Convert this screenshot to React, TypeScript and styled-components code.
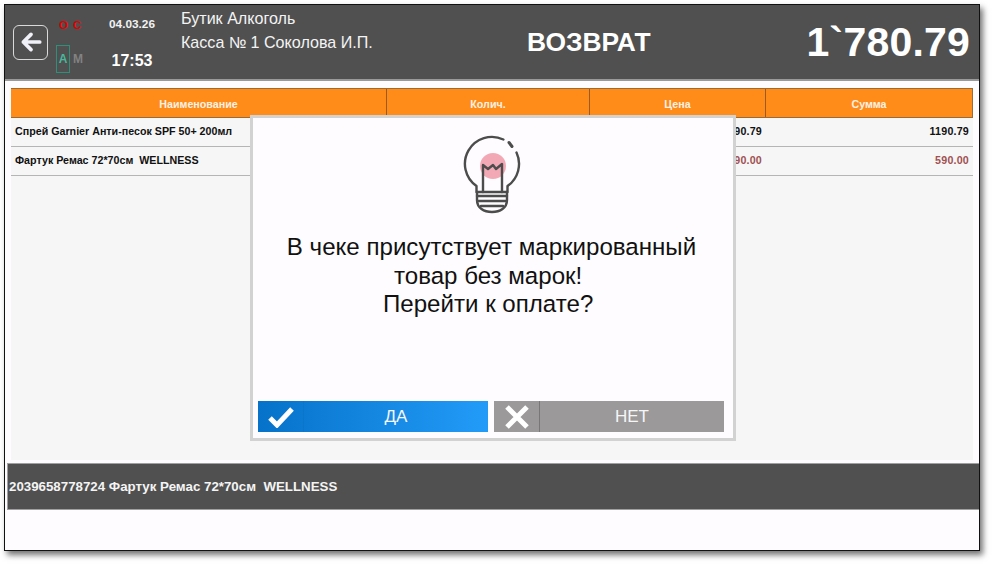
import React from "react";
import styled, { createGlobalStyle } from "styled-components";

const Global = createGlobalStyle`
  html, body { margin: 0; padding: 0; background: #fff; width: 993px; height: 564px; overflow: hidden; }
  * { box-sizing: border-box; }
`;
const Page = styled.div`
  width: 993px; height: 564px; padding: 4px 0 0 4px; background: #fff;
  font-family: "Liberation Sans", Arial, sans-serif;
`;
const Frame = styled.div`
  position: relative; width: 976px; height: 547px; background: #fefcfe;
  border: 1px solid #111; display: flex; flex-direction: column;
  box-shadow: 3px 4px 6px rgba(0,0,0,.55);
`;
const Header = styled.header`
  height: 76px; flex: none; background: #505050; border-bottom: 2px solid #9a9a9a;
  display: grid; grid-template-columns: 47px 51px 75px 346px 1fr auto; align-items: stretch; color: #fff;
`;
const BackCell = styled.div`display: flex; align-items: center; padding: 0 0 0 8px;`;
const BackButton = styled.div`
  width: 35px; height: 35px; border: 1.5px solid #d9d9d9; border-radius: 6px;
  display: flex; align-items: center; justify-content: center;
`;
const Status = styled.div`display: flex; flex-direction: column; padding: 15px 0 0 4px;`;
const Leds = styled.div`
  display: flex; gap: 5px; padding-left: 3px; color: #e00000; font-size: 11.5px; font-weight: 700; line-height: 11px;
`;
const Modes = styled.div`display: flex; align-items: center; margin-top: 14px; font-size: 12px; font-weight: 700;`;
const ModeA = styled.span`
  width: 14px; height: 28px; border: 1px solid #2f8f78; color: #48b79c;
  display: flex; align-items: center; justify-content: center;
`;
const ModeM = styled.span`color: #828282; margin-left: 3px;`;
const Clock = styled.div`display: flex; flex-direction: column; align-items: center; padding-top: 12px; margin-left: -17px;`;
const DateText = styled.div`font-size: 11.8px; font-weight: 700; line-height: 14px; color: #f2f2f2;`;
const TimeText = styled.div`font-size: 16px; font-weight: 700; line-height: 18px; margin-top: 21px;`;
const Shop = styled.div`
  padding: 1px 0 0 3px; font-size: 16.1px; line-height: 24px; color: #f4f4f4; white-space: nowrap;
`;
const Mode = styled.div`
  font-size: 26.4px; font-weight: 700; display: flex; align-items: center; margin-left: 3px;
`;
const Total = styled.div`
  font-size: 41px; font-weight: 700; display: flex; align-items: center; padding: 0 9px 0 0; letter-spacing: .2px;
`;
const Body = styled.div`flex: 1; min-height: 0; display: flex; flex-direction: column;`;
const TableArea = styled.div`
  height: 372px; margin: 7px 6px 0 6px; background: #f6f6f6; flex: none;
`;
const Row = styled.div`
  display: grid; grid-template-columns: 376px 203px 176px 1fr; height: 29px; align-items: center;
`;
const HeadRow = styled(Row)`
  background: #ff8c19; height: 30px; border: 1px solid #9a6a3a; border-width: 1px 1px 1px 0;
`;
const HeadCell = styled.div`
  height: 100%; display: flex; align-items: center; justify-content: center; padding-top: 1px;
  color: #fdf1e4; font-size: 10.7px; font-weight: 700; border-right: 1px solid #9a5a20;
  &:last-child { border-right: 0; }
`;
const BodyRow = styled(Row)`border-bottom: 1px solid #b5b5b5; padding-bottom: 2px;`;
const Name = styled.div`padding-left: 4px; font-size: 10.7px; font-weight: 700; color: #111; white-space: pre;`;
const Num = styled.div<{ $return?: boolean }>`
  text-align: right; padding-right: 4px; font-size: 10.7px; font-weight: 700; letter-spacing: .2px;
  color: ${p => (p.$return ? "#a05050" : "#111")};
`;
const ScanBar = styled.div`
  height: 47px; margin: 3px 0 0 2px; flex: none; background: #505050; border: 1px solid #a0a0a0; border-right: 0;
  color: #f4f4f4; font-size: 13.3px; font-weight: 700; display: flex; align-items: center; padding-left: 1px; white-space: pre;
`;
const Dialog = styled.div`
  position: absolute; left: 245px; top: 110px; width: 486px; height: 326px; background: #fefcfe;
  border: 3px solid #d2d2d2; display: flex; flex-direction: column; align-items: center;
`;
const Bulb = styled.svg`width: 62px; height: 80px; margin-top: 17px; flex: none;`;
const Message = styled.div`
  margin-top: 18px; padding-right: 3px; text-align: center; font-size: 24.1px; line-height: 28.5px; color: #111; white-space: pre;
`;
const Actions = styled.div`
  margin-top: auto; margin-bottom: 6px; width: 100%; padding: 0 0 0 5px; display: flex; gap: 6px;
`;
const Action = styled.div<{ $primary?: boolean }>`
  width: 230px; height: 31px; display: grid; grid-template-columns: 46px 1fr; color: #f6f6f6; font-size: 17px;
  background: ${p => (p.$primary ? "linear-gradient(90deg,#0672c9,#229bf8)" : "#9b999a")};
`;
const ActionIcon = styled.div<{ $primary?: boolean }>`
  display: flex; align-items: center; justify-content: center;
  border-right: 1px solid ${p => (p.$primary ? "rgba(0,80,160,.12)" : "#777")};
`;
const ActionLabel = styled.div`display: flex; align-items: center; justify-content: center;`;

export default function App() {
  return (
    <Page>
      <Global />
      <Frame>
        <Header>
          <BackCell>
            <BackButton>
              <svg width="24" height="24" viewBox="0 0 22 22" fill="none" stroke="#f0f0f8" strokeWidth="3.4" strokeLinecap="round" strokeLinejoin="round">
                <path d="M19 11H4M11 4l-7 7 7 7" />
              </svg>
            </BackButton>
          </BackCell>
          <Status>
            <Leds><span>O</span><span>C</span></Leds>
            <Modes><ModeA>A</ModeA><ModeM>M</ModeM></Modes>
          </Status>
          <Clock>
            <DateText>04.03.26</DateText>
            <TimeText>17:53</TimeText>
          </Clock>
          <Shop>Бутик Алкоголь<br />Касса № 1 Соколова И.П.</Shop>
          <Mode>ВОЗВРАТ</Mode>
          <Total>1`780.79</Total>
        </Header>
        <Body>
          <TableArea>
            <HeadRow>
              <HeadCell>Наименование</HeadCell>
              <HeadCell>Колич.</HeadCell>
              <HeadCell>Цена</HeadCell>
              <HeadCell>Сумма</HeadCell>
            </HeadRow>
            <BodyRow>
              <Name>Спрей Garnier Анти-песок SPF 50+ 200мл</Name>
              <Num>1</Num>
              <Num>1190.79</Num>
              <Num>1190.79</Num>
            </BodyRow>
            <BodyRow>
              <Name>Фартук Ремас 72*70см  WELLNESS</Name>
              <Num $return>1</Num>
              <Num $return>590.00</Num>
              <Num $return>590.00</Num>
            </BodyRow>
          </TableArea>
          <ScanBar>2039658778724 Фартук Ремас 72*70см  WELLNESS</ScanBar>
        </Body>
        <Dialog>
          <Bulb viewBox="0 0 62 80" fill="none">
            <circle cx="31" cy="31" r="13" fill="#f2a9b5" />
            <g stroke="#4c4c4c" strokeWidth="2.4" strokeLinecap="round" strokeLinejoin="round">
              <path d="M41.400 4.500A27 27 0 0 0 14.500 51.100V57" />
              <path d="M54.500 17.600A27 27 0 0 1 45.500 51.100V57" />
              <path d="M47 7.500l3 4" strokeWidth="3" />
              <path d="M21 57V30l5 4 5-4 3 4 6-5v28" />
              <path d="M15 57h30M15 61h30M16 66h28M19 71h22" />
              <path d="M15 57v8c0 8 7 12 15 12s15-4 15-12v-8" />
            </g>
          </Bulb>
          <Message>{"В чеке присутствует маркированный\nтовар без марок! \nПерейти к оплате? "}</Message>
          <Actions>
            <Action $primary>
              <ActionIcon $primary>
                <svg width="26" height="22" viewBox="0 0 26 22" fill="none" stroke="#fff" strokeWidth="5">
                  <path d="M2 12l7 7L24 3" />
                </svg>
              </ActionIcon>
              <ActionLabel>ДА</ActionLabel>
            </Action>
            <Action>
              <ActionIcon>
                <svg width="24" height="24" viewBox="0 0 24 24" fill="none" stroke="#fff" strokeWidth="5">
                  <path d="M2 2l20 20M22 2L2 22" />
                </svg>
              </ActionIcon>
              <ActionLabel>НЕТ</ActionLabel>
            </Action>
          </Actions>
        </Dialog>
      </Frame>
    </Page>
  );
}
